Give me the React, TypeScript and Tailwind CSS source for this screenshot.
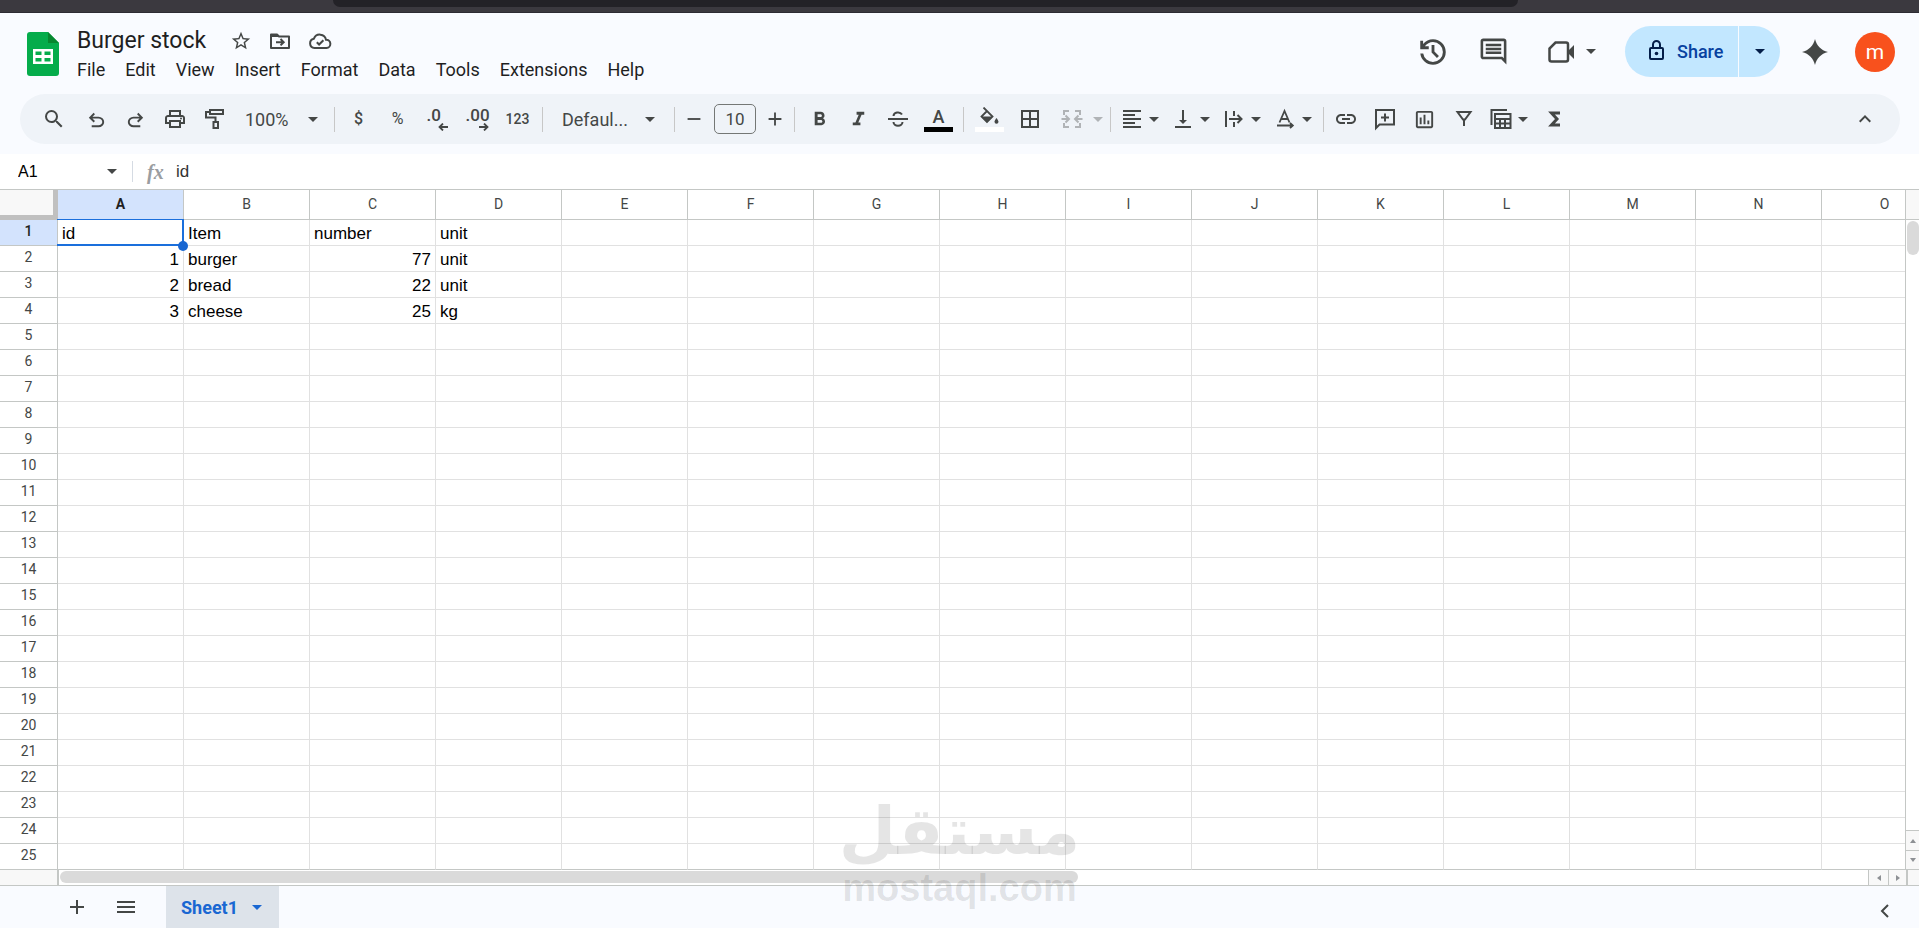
import { ReactNode } from 'react';
import clsx from 'clsx';
import {
    MdAdd, MdBorderAll, MdFormatAlignLeft, MdFormatBold, MdFormatItalic,
    MdKeyboardArrowUp, MdLink, MdOutlineComment, MdOutlineInsertChart, MdOutlinePrint,
    MdRemove, MdSearch, MdStarBorder, MdVerticalAlignBottom,
} from 'react-icons/md';

const columns = ['A', 'B', 'C', 'D', 'E', 'F', 'G', 'H', 'I', 'J', 'K', 'L', 'M', 'N', 'O'];
const rowCount = 25;

const cells: (string | number)[][] = [
    ['id', 'Item', 'number', 'unit'],
    [1, 'burger', 77, 'unit'],
    [2, 'bread', 22, 'unit'],
    [3, 'cheese', 25, 'kg'],
];

const menus = ['File', 'Edit', 'View', 'Insert', 'Format', 'Data', 'Tools', 'Extensions', 'Help'];

function Symbol({ d, className }: { d: string; className: string }) {
    return (
        <svg viewBox="0 -960 960 960" fill="currentColor" className={className} aria-hidden="true">
            <path d={d} />
        </svg>
    );
}

const undoPath = 'M280-200v-80h284q63 0 109.5-40T720-420q0-60-46.5-100T564-560H312l104 104-56 56-200-200 200-200 56 56-104 104h252q97 0 167 63t70 157q0 94-70 157t-167 63H280Z';
const redoPath = 'M396-200q-97 0-167-63t-70-157q0-94 70-157t167-63h252L544-744l56-56 200 200-200 200-56-56 104-104H396q-63 0-109.5 40T240-420q0 60 46.5 100T396-280h284v80H396Z';
const historyPath = 'M480-120q-138 0-240.5-91.5T122-440h82q14 104 92.5 172T480-200q117 0 198.5-81.5T760-480q0-117-81.5-198.5T480-760q-69 0-129 32t-101 88h110v80H120v-240h80v94q51-64 124.5-99T480-840q75 0 140.5 28.5t114 77q48.5 48.5 77 114T840-480q0 75-28.5 140.5t-77 114q-48.5 48.5-114 77T480-120Zm112-192L440-464v-216h80v184l128 128-56 56Z';

function Caret() {
    return (
        <svg viewBox="0 0 10 5" fill="currentColor" className="w-2.5 h-[5px] shrink-0" aria-hidden="true">
            <path d="M0 0h10L5 5z" />
        </svg>
    );
}

// 24px line icon, strokes only
function Line({ children, className = 'size-6' }: { children: ReactNode; className?: string }) {
    return (
        <svg viewBox="0 0 24 24" fill="none" stroke="currentColor" strokeWidth="2" className={clsx('shrink-0', className)} aria-hidden="true">
            {children}
        </svg>
    );
}

function Tool({ label, width = 'w-10', children }: { label: string; width?: string; children: ReactNode }) {
    return (
        <button aria-label={label} className={clsx('h-9 shrink-0 flex items-center justify-center rounded', width)}>
            {children}
        </button>
    );
}

function DropTool({ label, children }: { label: string; children: ReactNode }) {
    return (
        <button aria-label={label} className="w-[51px] h-9 pl-[5px] shrink-0 flex items-center gap-[5px] rounded">
            {children}
            <Caret />
        </button>
    );
}

function Separator() {
    return (
        <div className="w-[9px] shrink-0 flex justify-center">
            <div className="w-px h-[25px] bg-[#c7c7c7]" />
        </div>
    );
}

function SheetsLogo() {
    return (
        <svg viewBox="0 0 32 44" className="w-8 h-11" aria-hidden="true">
            <path d="M3 0h18l11 11v30a3 3 0 0 1-3 3H3a3 3 0 0 1-3-3V3a3 3 0 0 1 3-3z" fill="#05ac4b" />
            <path d="M21 0l11 11H21z" fill="#07872f" />
            <path d="M6 17h20v15H6zM8.500 19.500v3.500h6v-3.500zM17.500 19.500v3.500h6v-3.500zM8.500 26v3.500h6V26zM17.500 26v3.500h6V26z" fill="#fff" fillRule="evenodd" />
        </svg>
    );
}

function Header() {
    return (
        <header className="flex justify-between pl-[27px] pr-6 h-[81px] text-[#444746]">
            <div className="flex">
                <a href="#home" aria-label="Sheets home" className="pt-[19px]">
                    <SheetsLogo />
                </a>
                <div className="pl-2 pt-3">
                    <div className="flex items-center h-8 pl-2.5">
                        <h1 className="text-[23px] leading-8 text-[#1f1f1f]">Burger stock</h1>
                        <div className="flex items-center ml-6 gap-4">
                            <button aria-label="Star"><MdStarBorder className="size-[22px]" /></button>
                            <button aria-label="Move">
                                <Line>
                                    <path d="M3 5.500h6l2 2h10v11.500H3z" strokeLinejoin="round" />
                                    <path d="M3 6h7v2H3z" fill="currentColor" stroke="none" />
                                    <path d="M8 13.200h7M12.500 10l3.200 3.200-3.200 3.200" />
                                </Line>
                            </button>
                            <button aria-label="See document status">
                                <Line>
                                    <path d="M6.500 19a4.700 4.700 0 0 1-.6-9.300A6.300 6.300 0 0 1 18 10.800 4.100 4.100 0 0 1 18.500 19z" />
                                    <path d="M8.800 13.200l2.300 2.300 4.300-4.300" />
                                </Line>
                            </button>
                        </div>
                    </div>
                    <nav className="flex text-[18px] leading-[26px] text-[#1f1f1f]">
                        {menus.map((m) => (
                            <button key={m} className="px-2.5">{m}</button>
                        ))}
                    </nav>
                </div>
            </div>

            <div className="flex items-center h-[77px]">
                <button aria-label="Version history"><Symbol d={historyPath} className="size-[34px]" /></button>
                <button aria-label="Comments" className="ml-7"><MdOutlineComment className="size-[31px]" /></button>
                <button aria-label="Join a call" className="ml-[39px] flex items-center gap-3">
                    <svg viewBox="0 0 26 22" className="w-[26px] h-[22px]" aria-hidden="true">
                        <path d="M7.500 1.500H18a2 2 0 0 1 2 2v15a2 2 0 0 1-2 2H3.500a2 2 0 0 1-2-2v-11z" fill="none" stroke="currentColor" strokeWidth="2.500" />
                        <path d="M19 11l7-7v14z" fill="currentColor" />
                    </svg>
                    <Caret />
                </button>
                <div className="ml-[29px] flex h-[51px] text-[#0842a0]">
                    <button className="w-[113px] pl-[23px] flex items-center gap-3 rounded-l-full bg-[#c2e7ff] text-[18px] font-medium">
                        <svg viewBox="0 0 17 22" fill="none" stroke="#041e49" strokeWidth="2" className="w-[17px] h-[22px] -mt-1" aria-hidden="true">
                            <rect x="2" y="9" width="13" height="11" rx="1" />
                            <path d="M5 9V5.500a3.500 3.500 0 0 1 7 0V9" />
                            <circle cx="8.500" cy="14.500" r="1.800" fill="#041e49" stroke="none" />
                        </svg>
                        Share
                    </button>
                    <button aria-label="Quick sharing actions" className="ml-px w-[41px] flex items-center justify-center rounded-r-full bg-[#c2e7ff] text-[#041e49]">
                        <Caret />
                    </button>
                </div>
                <button aria-label="Ask Gemini" className="ml-[22px]">
                    <svg viewBox="0 0 26 26" fill="currentColor" className="size-[26px]" aria-hidden="true">
                        <path d="M13 0c1.500 6.500 6 11.300 13 13-7 1.700-11.500 6.500-13 13-1.500-6.500-6-11.300-13-13C7 11.300 11.500 6.500 13 0z" />
                    </svg>
                </button>
                <button aria-label="Account" className="ml-[27px] size-10 rounded-full bg-[#f8511d] text-white text-[21px] leading-9">m</button>
            </div>
        </header>
    );
}

function Toolbar() {
    return (
        <div role="toolbar" className="ml-5 mr-[19px] h-[50px] pl-3.5 pr-[15px] rounded-full bg-[#eff3f8] flex items-center text-[#444746]">
            <Tool label="Search the menus"><MdSearch className="size-6" /></Tool>
            <div className="flex items-center pl-[3px] pt-0.5">
                <Tool label="Undo" width="w-[39px]"><Symbol d={undoPath} className="size-[23px]" /></Tool>
                <Tool label="Redo" width="w-[39px]"><Symbol d={redoPath} className="size-[23px]" /></Tool>
            </div>
            <Tool label="Print"><MdOutlinePrint className="size-6" /></Tool>
            <Tool label="Paint format" width="w-[39px]">
                <Line>
                    <path d="M7 3h13v4H7zM7 5H3v5.500h9.500V15M10.500 15h4.500v6h-4.500z" />
                </Line>
            </Tool>
            <button className="w-24 h-9 pl-[11px] shrink-0 flex items-center gap-[17px] text-[18px]">
                <span className="w-[46px] text-left">100%</span>
                <Caret />
            </button>
            <Separator />
            <Tool label="Format as currency" width="w-[39px]"><span className="text-base font-medium">$</span></Tool>
            <Tool label="Format as percent" width="w-[39px]"><span className="text-base">%</span></Tool>
            <Tool label="Decrease decimal places">
                <span className="w-[21px] flex flex-col">
                    <span className="text-left text-[17px] font-medium leading-4">.0</span>
                    <svg viewBox="0 0 10 8" fill="none" stroke="currentColor" strokeWidth="1.800" className="self-end w-2.5 h-2">
                        <path d="M10 4H1.500M5 .5L1.500 4 5 7.500" />
                    </svg>
                </span>
            </Tool>
            <Tool label="Increase decimal places">
                <span className="w-[23px] flex flex-col">
                    <span className="text-left text-[17px] font-medium leading-4">.00</span>
                    <svg viewBox="0 0 10 8" fill="none" stroke="currentColor" strokeWidth="1.800" className="self-end w-2.5 h-2">
                        <path d="M0 4h8.500M5 .5L8.500 4 5 7.500" />
                    </svg>
                </span>
            </Tool>
            <Tool label="More formats" width="w-[41px]"><span className="text-sm font-medium">123</span></Tool>
            <Separator />
            <button className="w-[123px] h-9 pl-[15px] shrink-0 flex items-center gap-4 text-[18px]">
                <span className="w-[67px] text-left">Defaul...</span>
                <Caret />
            </button>
            <Separator />
            <Tool label="Decrease font size" width="w-[30px]"><MdRemove className="size-[22px]" /></Tool>
            <input
                aria-label="Font size"
                defaultValue="10"
                className="ml-[5px] mr-1 w-[42px] h-[30px] shrink-0 rounded-[5px] border border-[#747775] bg-transparent text-center text-[17px] outline-none"
            />
            <Tool label="Increase font size" width="w-[30px]"><MdAdd className="size-[22px]" /></Tool>
            <Separator />
            <Tool label="Bold"><MdFormatBold className="size-[23px]" /></Tool>
            <Tool label="Italic" width="w-[39px]"><MdFormatItalic className="size-[23px]" /></Tool>
            <Tool label="Strikethrough">
                <Line>
                    <path d="M2 12h20M7.500 9a4.500 3.700 0 0 1 8.500-1.500M7.500 15a4.500 3.700 0 0 0 9 0" />
                </Line>
            </Tool>
            <Tool label="Text color" width="w-[41px]">
                <span className="flex flex-col items-center">
                    <span className="text-[18px] font-medium leading-5">A</span>
                    <span className="w-[29px] h-[5px] bg-black" />
                </span>
            </Tool>
            <Separator />
            <Tool label="Fill color" width="w-[42px]">
                <span className="flex flex-col items-center">
                    <svg viewBox="0 0 20 18" className="w-5 h-[18px]" aria-hidden="true">
                        <path d="M4.500.500l9 9-5.500 5.500-5.500-5.500 5.500-5.500" fill="none" stroke="currentColor" strokeWidth="1.800" />
                        <path d="M2 9.500h12L8 15.500zM17.500 11s2 2.500 2 3.800a2 2 0 0 1-4 0c0-1.300 2-3.800 2-3.800z" fill="currentColor" />
                    </svg>
                    <span className="mt-0.5 w-[29px] h-[5px] bg-white" />
                </span>
            </Tool>
            <Tool label="Borders"><MdBorderAll className="size-6" /></Tool>
            <button aria-label="Merge cells" disabled className="w-14 h-9 pl-2.5 shrink-0 flex items-center gap-[9px] text-[#b0b3b6]">
                <Line>
                    <path d="M9 4H4v4M4 16v4h5M15 4h5v4M20 16v4h-5M1.500 12H8M5.500 8.500L9 12l-3.500 3.500M22.500 12H16M18.500 8.500L15 12l3.500 3.500" />
                </Line>
                <Caret />
            </button>
            <Separator />
            <DropTool label="Horizontal align"><MdFormatAlignLeft className="size-6" /></DropTool>
            <DropTool label="Vertical align"><MdVerticalAlignBottom className="size-6" /></DropTool>
            <DropTool label="Text wrapping">
                <Line>
                    <path d="M4 4v16M12 4v5M12 15v5M7 12h12M15.500 8l4 4-4 4" />
                </Line>
            </DropTool>
            <DropTool label="Text rotation">
                <Line>
                    <path d="M6.500 15.500L11.500 4l5 11.500M8.500 12h6" strokeWidth="1.800" />
                    <path d="M4 18.500h15M17 16l2.800 2.500L17 21" strokeWidth="1.800" />
                </Line>
            </DropTool>
            <Separator />
            <Tool label="Insert link" width="w-9"><MdLink className="size-6" /></Tool>
            <Tool label="Insert comment" width="w-[41px]">
                <Line>
                    <path d="M3 3h18v14.500H6.500L3 21zM12 6.500v8M8 10.500h8" />
                </Line>
            </Tool>
            <Tool label="Insert chart" width="w-[39px]"><MdOutlineInsertChart className="size-[23px]" /></Tool>
            <Tool label="Create a filter">
                <Line>
                    <path d="M5.500 5h13L13 12.500h-2zM12 12v7" />
                </Line>
            </Tool>
            <DropTool label="Table views">
                <Line>
                    <path d="M2.500 18V3H18M6 7h15.500v14H6zM6 12h15.500M6 16.500h15.500M11 12v9M16 12v9" strokeWidth="2" />
                </Line>
            </DropTool>
            <Tool label="Functions">
                <Line>
                    <path d="M17 6H8.500l5.500 6-5.500 6H17" strokeWidth="3" />
                </Line>
            </Tool>
            <div className="ml-auto">
                <Tool label="Hide the menus"><MdKeyboardArrowUp className="size-6" /></Tool>
            </div>
        </div>
    );
}

function FormulaBar() {
    return (
        <div className="h-[35px] flex items-center bg-white">
            <input aria-label="Name box" defaultValue="A1" className="w-[90px] pl-[18px] text-base text-black outline-none font-['Liberation_Sans',sans-serif]" />
            <button aria-label="Named ranges" className="ml-[17px] text-[#444746]"><Caret /></button>
            <div className="ml-[15px] w-px h-[21px] bg-[#d5dbe3]" />
            <span className="ml-3.5 w-[29px] text-[20px] leading-6 italic font-bold text-[#9a9da1] font-['Liberation_Serif',serif]">fx</span>
            <input aria-label="Formula" defaultValue="id" className="flex-1 text-[17px] text-[#333] outline-none font-['Liberation_Sans',sans-serif]" />
        </div>
    );
}

function Grid() {
    return (
        <div className="flex-1 min-w-0 overflow-hidden">
            <table className="w-[1948px] table-fixed border-separate border-spacing-0">
                <colgroup>
                    <col className="w-[58px]" />
                    {columns.map((c) => <col key={c} className="w-[126px]" />)}
                </colgroup>
                <thead>
                    <tr className="h-[30px]">
                        <td className="bg-[#f8f8f8] border-r-[5px] border-b-[5px] border-[#c0c0c0]" />
                        {columns.map((c) => (
                            <th
                                key={c}
                                scope="col"
                                className={clsx(
                                    'border-r border-b border-[#c4c7c5] p-0 pb-0.5 text-sm',
                                    c === 'A' ? 'bg-[#d3e3fd] font-bold text-[#1f1f1f]' : 'font-normal text-[#444746]',
                                )}
                            >
                                {c}
                            </th>
                        ))}
                    </tr>
                </thead>
                <tbody>
                    {Array.from({ length: rowCount }, (_, r) => (
                        <tr key={r} className="h-[26px]">
                            <th
                                scope="row"
                                className={clsx(
                                    'border-r border-b border-[#c4c7c5] p-0 pb-[3px] text-sm leading-[18px]',
                                    r === 0 ? 'bg-[#d3e3fd] font-medium text-[#1f1f1f]' : 'font-normal text-[#444746]',
                                )}
                            >
                                {r + 1}
                            </th>
                            {columns.map((c, i) => {
                                const value = cells[r]?.[i] ?? '';
                                const selected = r === 0 && i === 0;
                                return (
                                    <td
                                        key={c}
                                        className={clsx(
                                            'relative border-r border-b p-0 px-1 pt-0.5 text-[17px] leading-[22px] text-black font-["Liberation_Sans",sans-serif]',
                                            r === rowCount - 1 ? 'border-r-[#e1e1e1] border-b-[#c4c7c5]' : 'border-[#e1e1e1]',
                                            typeof value === 'number' && 'text-right',
                                        )}
                                    >
                                        {value}
                                        {selected && (
                                            <>
                                                <span className="absolute -inset-px border-2 border-l-0 border-t border-[#1a6fdc] pointer-events-none" />
                                                <span className="absolute z-10 -right-[5px] -bottom-1.5 size-2.5 rounded-full bg-[#1967d2]" />
                                            </>
                                        )}
                                    </td>
                                );
                            })}
                        </tr>
                    ))}
                </tbody>
            </table>
        </div>
    );
}

const arrowButton = 'flex items-center justify-center bg-[#f8f8f8] border-[#c4c7c5] text-[#8d9094]';

function Scrollbars() {
    return (
        <div className="w-3.5 shrink-0 flex flex-col border-l border-b border-[#c4c7c5]">
            <div className="h-[30px] bg-[#f8f8f8] border-b border-[#c4c7c5]" />
            <div className="flex-1 pt-px pl-px">
                <div className="h-[34px] rounded-full bg-[#dadada]" />
            </div>
            <button aria-label="Scroll up" className={clsx(arrowButton, 'h-5 border-t')}>
                <svg viewBox="0 0 6 4" fill="currentColor" className="w-1.5 h-1"><path d="M0 4l3-4 3 4z" /></svg>
            </button>
            <button aria-label="Scroll down" className={clsx(arrowButton, 'h-[19px] border-t')}>
                <svg viewBox="0 0 6 4" fill="currentColor" className="w-1.5 h-1"><path d="M0 0h6L3 4z" /></svg>
            </button>
        </div>
    );
}

function HorizontalScrollbar() {
    return (
        <div className="h-4 shrink-0 flex bg-white border-b border-[#c4c7c5]">
            <div className="w-[59px] bg-[#f8f8f8] border-r-2 border-[#c4c7c5]" />
            <div className="flex-1 pl-px pt-px">
                <div className="w-[56.3%] h-3 rounded-full bg-[#dadada]" />
            </div>
            <button aria-label="Scroll left" className={clsx(arrowButton, 'w-5 border-l')}>
                <svg viewBox="0 0 4 6" fill="currentColor" className="w-1 h-1.5"><path d="M4 0L0 3l4 3z" /></svg>
            </button>
            <button aria-label="Scroll right" className={clsx(arrowButton, 'w-[18px] border-l')}>
                <svg viewBox="0 0 4 6" fill="currentColor" className="w-1 h-1.5"><path d="M0 0l4 3-4 3z" /></svg>
            </button>
            <div className="w-[13px] bg-[#f8f8f8] border-l-2 border-[#c4c7c5]" />
        </div>
    );
}

function SheetTabs() {
    return (
        <footer className="h-[42px] shrink-0 flex items-center text-[#444746]">
            <button aria-label="Add sheet" className="ml-[65px]"><MdAdd className="size-6" /></button>
            <button aria-label="All sheets" className="ml-[25px]">
                <Line><path d="M3 7h18M3 12h18M3 17h18" /></Line>
            </button>
            <button className="ml-7 h-full w-[113px] pl-[15px] flex items-center gap-3.5 bg-[#dde3ea] text-[#1967d2] text-[18px] font-bold">
                Sheet1
                <Caret />
            </button>
            <button aria-label="Show side panel" className="ml-auto mr-[26px] pt-2">
                <svg viewBox="0 0 16 16" fill="none" stroke="currentColor" strokeWidth="2" className="size-4"><path d="M11 2L5 8l6 6" /></svg>
            </button>
        </footer>
    );
}

function Watermark() {
    return (
        <div className="absolute bottom-5 left-1/2 -translate-x-1/2 flex flex-col items-center font-bold text-black/10 pointer-events-none">
            <span lang="ar" dir="rtl" className="text-[66px] leading-[72px] font-['DejaVu_Sans',sans-serif]">مستقل</span>
            <span className="text-[38px] leading-10 font-['Liberation_Sans',sans-serif]">mostaql.com</span>
        </div>
    );
}

export default function App() {
    return (
        <div className="relative h-screen flex flex-col overflow-hidden bg-[#f9fbff] font-[Roboto,sans-serif]">
            <div className="h-[13px] shrink-0 bg-[#3b393f] border-b border-[#2d2b33]">
                <div className="ml-[333px] mr-[401px] h-[7px] rounded-b-lg bg-[#232227]" />
            </div>
            <div className="shrink-0">
                <Header />
                <Toolbar />
                <div className="mt-2.5">
                    <FormulaBar />
                </div>
            </div>
            <main className="flex-1 min-h-0 flex bg-white border-t border-[#c4c7c5]">
                <Grid />
                <Scrollbars />
            </main>
            <HorizontalScrollbar />
            <SheetTabs />
            <Watermark />
        </div>
    );
}
